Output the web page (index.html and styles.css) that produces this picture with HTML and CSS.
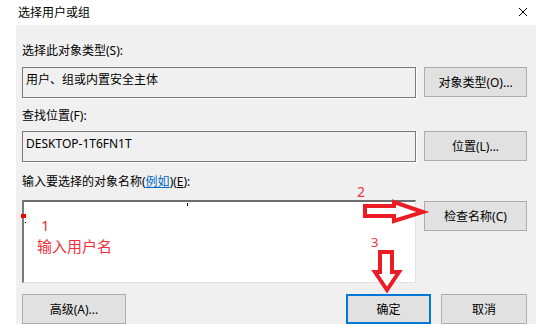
FILE: index.html
```html
<!DOCTYPE html>
<html lang="zh-CN">
<head>
    <meta charset="UTF-8">
    <title>选择用户或组</title>
    <link rel="stylesheet" href="styles.css">
</head>
<body>
    <div class="dialog">
        <div class="titlebar">
            <span class="title">选择用户或组</span>
            <svg class="close" width="10" height="10" viewBox="0 0 10 10">
                <path d="M1 1 L9 9 M9 1 L1 9" stroke="#000" stroke-width="1" fill="none"/>
            </svg>
        </div>
        <div class="content">
            <div class="label">选择此对象类型(S):</div>
            <div class="row row-1">
                <div class="field">用户、组或内置安全主体</div>
                <button class="btn btn-wide">对象类型(O)...</button>
            </div>
            <div class="label label-2">查找位置(F):</div>
            <div class="row row-2">
                <div class="field">DESKTOP-1T6FN1T</div>
                <button class="btn btn-wide">位置(L)...</button>
            </div>
            <div class="label label-3">输入要选择的对象名称(<a class="link" href="#">例如</a>)(<u>E</u>):</div>
            <div class="row row-3">
                <div class="field field-input"></div>
                <button class="btn btn-wide btn-check">检查名称(C)</button>
            </div>
            <div class="actions">
                <button class="btn btn-wide">高级(A)...</button>
                <button class="btn btn-small btn-default">确定</button>
                <button class="btn btn-small">取消</button>
            </div>
        </div>

        <!-- annotations drawn over the dialog -->
        <span class="mark mark-red"></span>
        <span class="mark mark-dot"></span>
        <span class="mark mark-tick"></span>
        <span class="note note-1">1</span>
        <span class="note note-name">输入用户名</span>
        <span class="note note-2">2</span>
        <span class="note note-3">3</span>
        <svg class="arrows" width="536" height="325" viewBox="0 0 536 325">
            <polygon points="365,206 394,206 394,202 423,212 394,221 394,216 365,216"
                     fill="#fff" stroke="#ec1c24" stroke-width="4" stroke-linejoin="miter"/>
            <polygon points="380,252 392,252 392,272 399,272 387,290 375,272 380,272"
                     fill="#fff" stroke="#ec1c24" stroke-width="4" stroke-linejoin="miter"/>
        </svg>
    </div>
</body>
</html>
```

FILE: styles.css
```css
body {
    margin: 0;
    background: #ffffff;
    font-family: "Noto Sans", "Noto Sans CJK SC", sans-serif;
    font-size: 12px;
    color: #000;
}
.dialog {
    position: relative;
    width: 536px;
    height: 325px;
    overflow: hidden;
}
.titlebar {
    height: 25px;
    display: flex;
    align-items: center;
    justify-content: space-between;
    padding: 0 8px 0 18px;
    background: #ffffff;
}
.title {
    line-height: 14px;
}
.close {
    display: block;
    margin-top: -1px;
}
.content {
    margin-left: 16px;
    height: 299px;
    background: #f0f0f0;
    padding: 0 9px 0 6px;
    display: flex;
    flex-direction: column;
}
.label {
    height: 14px;
    line-height: 14px;
    margin-top: 19px;
}
.label-2 {
    margin-top: 11px;
}
.label-3 {
    margin-top: 13px;
}
.link {
    color: #0066cc;
    text-decoration: underline;
}
.row {
    display: flex;
    gap: 8px;
    align-items: flex-start;
}
.row-1 {
    margin-top: 9px;
}
.row-2 {
    margin-top: 8px;
}
.row-3 {
    margin-top: 11px;
}
.field {
    box-sizing: border-box;
    width: 394px;
    height: 31px;
    border: 1px solid #7a7a7a;
    box-shadow: 1px 1px 0 #ffffff;
    background: #f0f0f0;
    padding: 4px 0 0 3px;
    line-height: 16px;
}
.field-input {
    height: 83px;
    background: #ffffff;
    border-width: 2px 1px 1px 2px;
    border-style: solid;
    border-color: #6e6e6e #e3e3e3 #e3e3e3 #7a7a7a;
    box-shadow: none;
}
.btn {
    box-sizing: border-box;
    height: 30px;
    padding: 0;
    font-family: inherit;
    font-size: 12px;
    color: #000;
    background: #e1e1e1;
    border: 1px solid #adadad;
}
.btn-wide {
    width: 103px;
}
.btn-check {
    margin-top: 1px;
}
.btn-small {
    width: 86px;
}
.btn-default {
    border: 2px solid #0078d7;
    margin-left: auto;
    width: 85px;
}
.actions {
    display: flex;
    gap: 10px;
    margin-top: 11px;
}
.actions .btn-wide {
    width: 104px;
}
.mark {
    position: absolute;
    display: block;
}
.mark-red {
    left: 21px;
    top: 214px;
    width: 5px;
    height: 4px;
    background: #ff0000;
}
.mark-dot {
    left: 25px;
    top: 222px;
    width: 1px;
    height: 1px;
    background: #000;
}
.mark-tick {
    left: 187px;
    top: 203px;
    width: 1px;
    height: 3px;
    background: #000;
}
.note {
    position: absolute;
    color: #f2303c;
    font-size: 15px;
    line-height: 16px;
}
.note-1 {
    left: 41px;
    top: 217px;
}
.note-name {
    left: 37px;
    top: 238px;
}
.note-2 {
    left: 357px;
    top: 184px;
    font-size: 14px;
}
.note-3 {
    left: 371px;
    top: 234px;
    font-size: 13px;
}
.arrows {
    position: absolute;
    left: 0;
    top: 0;
    pointer-events: none;
}
```
